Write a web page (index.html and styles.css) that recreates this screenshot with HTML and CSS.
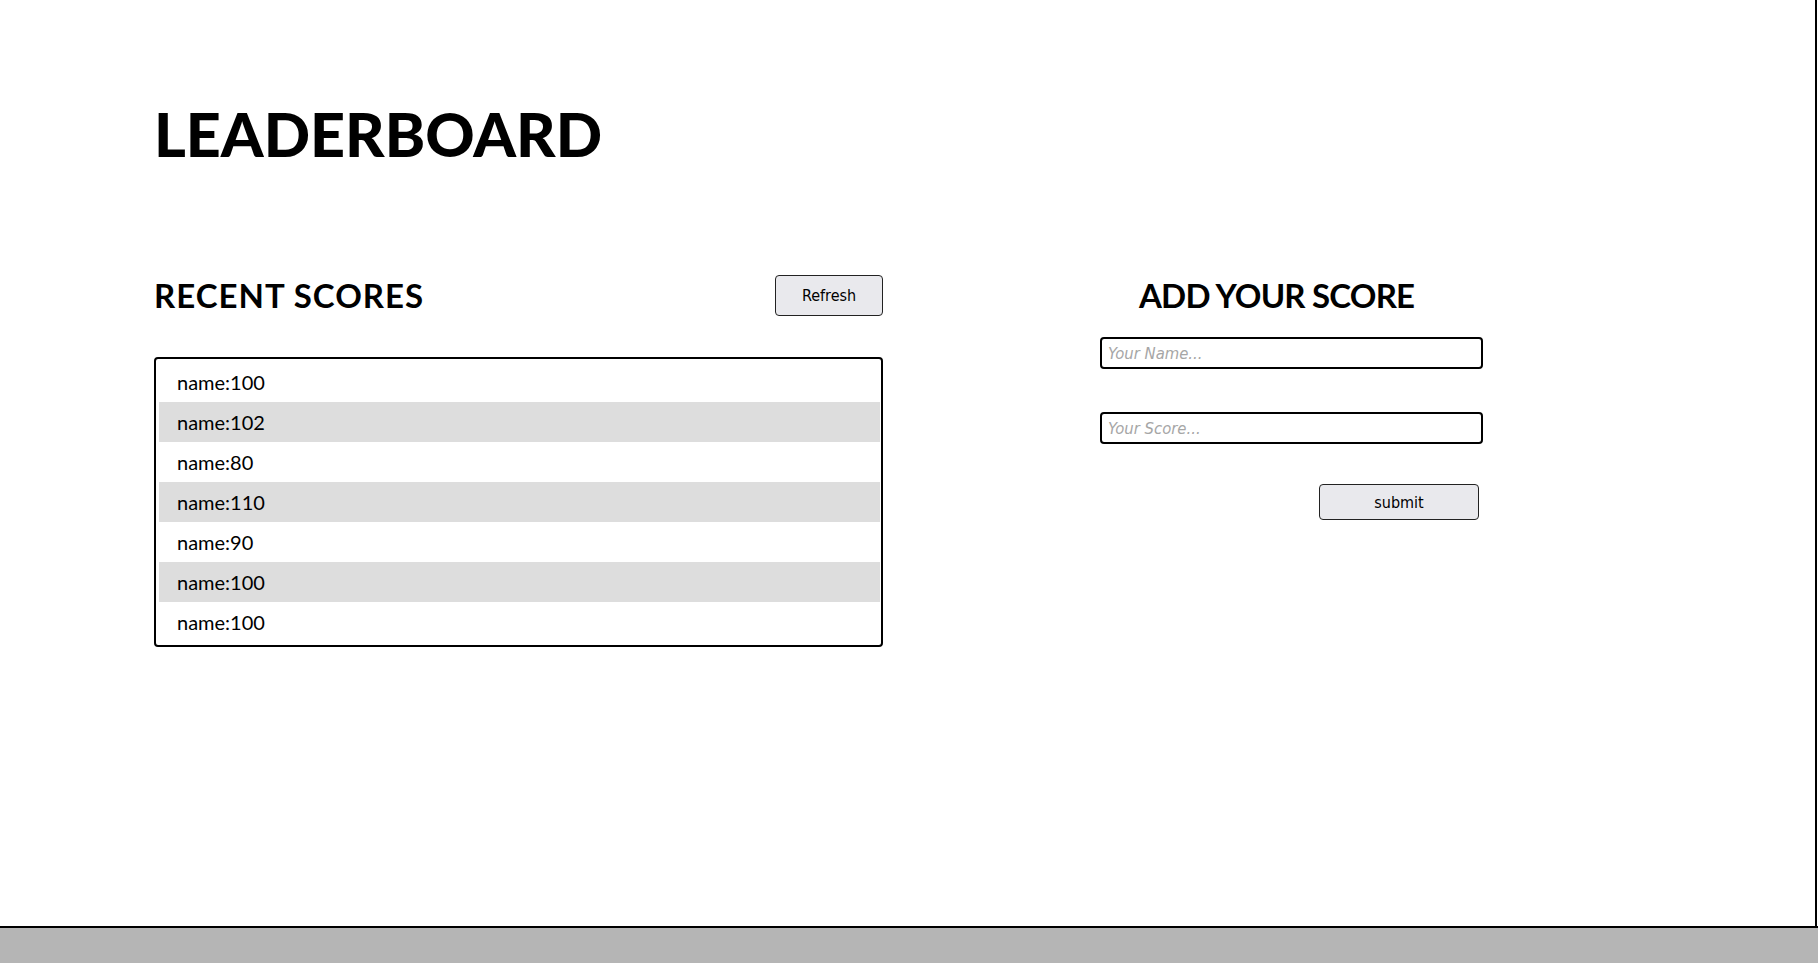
FILE: index.html
```html
<!DOCTYPE html>
<html lang="en">
<head>
<meta charset="utf-8">
<title>Leaderboard</title>
<link rel="stylesheet" href="styles.css">
</head>
<body>
<div class="page">
  <main class="main">
    <h1 class="title">LEADERBOARD</h1>
    <div class="columns">
      <section class="recent">
        <div class="recent-head">
          <h2 class="heading recent-heading">RECENT SCORES</h2>
          <button class="btn btn-refresh" type="button">Refresh</button>
        </div>
        <ul class="score-list">
          <li class="score">name:100</li>
          <li class="score">name:102</li>
          <li class="score">name:80</li>
          <li class="score">name:110</li>
          <li class="score">name:90</li>
          <li class="score">name:100</li>
          <li class="score">name:100</li>
        </ul>
      </section>
      <section class="add">
        <h2 class="heading add-heading">ADD YOUR SCORE</h2>
        <input class="field field-name" type="text" placeholder="Your Name...">
        <input class="field field-score" type="text" placeholder="Your Score...">
        <button class="btn btn-submit" type="button">submit</button>
      </section>
    </div>
  </main>
  <footer class="footer"></footer>
</div>
</body>
</html>
```

FILE: styles.css
```css
html, body {
  margin: 0;
  padding: 0;
  background: #fff;
}

body {
  font-family: "Comic Sans MS", "Lato", "DejaVu Sans", sans-serif;
  color: #000;
}

.page {
  height: 100vh;
  display: flex;
  flex-direction: column;
}

.main {
  flex: 1;
  margin-right: 1px;
  border-right: 2px solid #000;
  padding-left: 154px;
  box-sizing: border-box;
}

.title {
  margin: 0;
  padding-top: 102px;
  font-size: 61px;
  line-height: 64px;
  font-weight: 900;
}

.columns {
  display: flex;
  gap: 217px;
  margin-top: 109px;
}

.recent {
  width: 729px;
  display: flex;
  flex-direction: column;
}

.recent-head {
  height: 40px;
  display: flex;
  align-items: center;
  justify-content: space-between;
}

.heading {
  margin: 0;
  font-size: 33px;
  line-height: 40px;
  font-weight: 700;
}

.recent-heading {
  letter-spacing: 1px;
}

.btn {
  font-family: "DejaVu Sans Condensed", "DejaVu Sans", "Liberation Sans", sans-serif;
  font-stretch: condensed;
  font-size: 16px;
  color: #000;
  background: #e9e9ed;
  border: 1px solid #222;
  border-radius: 4px;
  padding: 0;
  box-sizing: border-box;
}

.btn-refresh {
  width: 108px;
  height: 41px;
}

.score-list {
  list-style: none;
  margin: 42px 0 0;
  padding: 3px 1px 3px 3px;
  border: 2px solid #000;
  border-radius: 4px;
}

.score {
  height: 40px;
  line-height: 40px;
  padding-left: 18px;
  font-size: 20px;
}

.score:nth-child(even) {
  background: #dddddd;
}

.add {
  width: 383px;
  display: flex;
  flex-direction: column;
}

.add-heading {
  padding-left: 39px;
  letter-spacing: -0.8px;
}

.field {
  box-sizing: border-box;
  width: 383px;
  height: 32px;
  border: 2px solid #000;
  border-radius: 4px;
  padding: 0 6px;
  font-family: "DejaVu Sans Condensed", "DejaVu Sans", "Liberation Sans", sans-serif;
  font-stretch: condensed;
  font-size: 16.5px;
  outline: none;
}

.field::placeholder {
  color: #a6a6a6;
  font-style: italic;
}

.field-name {
  margin-top: 22px;
}

.field-score {
  margin-top: 43px;
}

.btn-submit {
  width: 160px;
  height: 36px;
  margin-top: 40px;
  margin-left: auto;
  margin-right: 4px;
}

.footer {
  height: 35px;
  border-top: 2px solid #000;
  background: #b5b5b5;
}
```
